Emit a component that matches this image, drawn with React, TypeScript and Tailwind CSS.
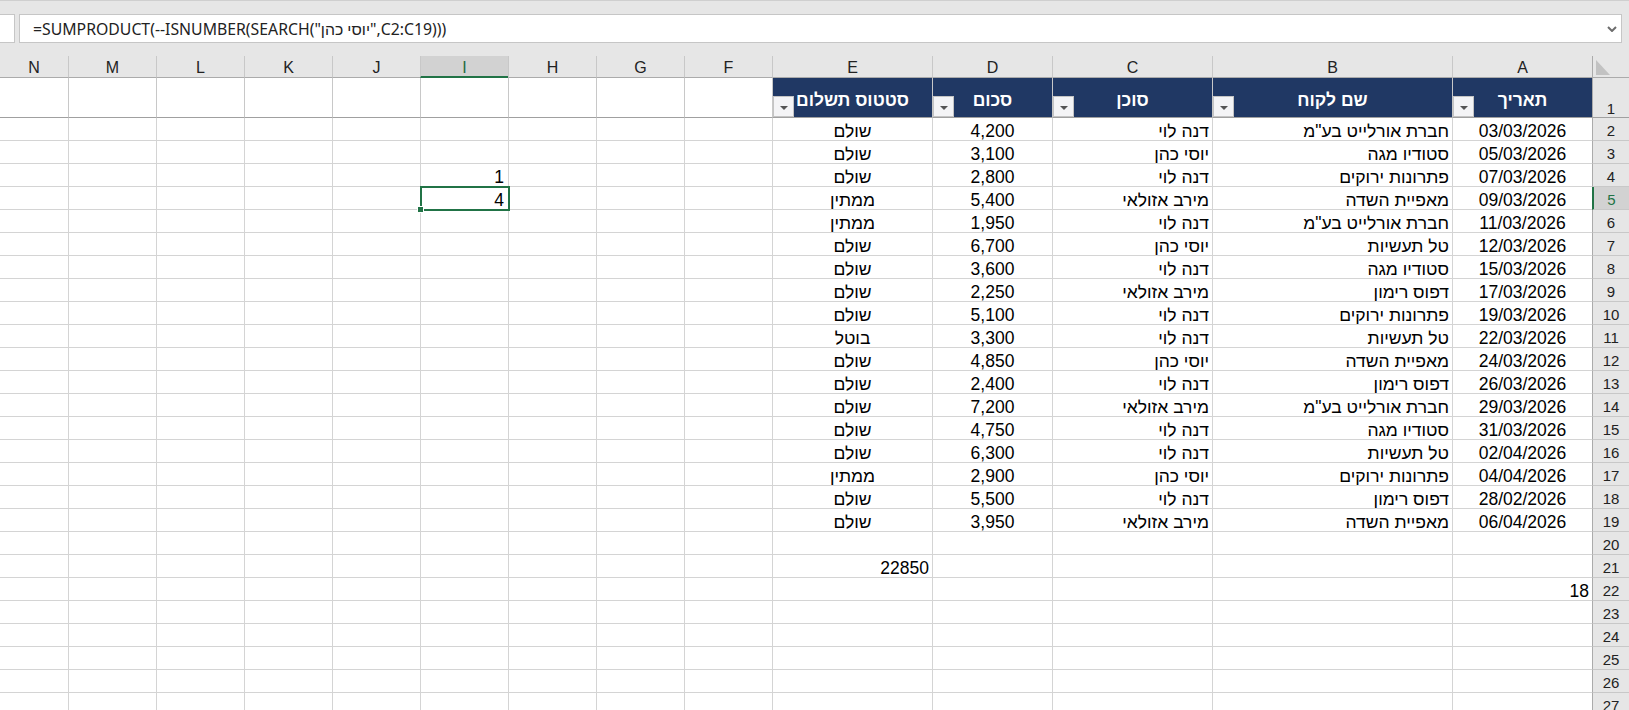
import React from "react";

type Row = [string, string, string, string, string];

const data: Row[] = [
  ["03/03/2026", 'חברת אורלייט בע"מ', "דנה לוי", "4,200", "שולם"],
  ["05/03/2026", "סטודיו מגה", "יוסי כהן", "3,100", "שולם"],
  ["07/03/2026", "פתרונות ירוקים", "דנה לוי", "2,800", "שולם"],
  ["09/03/2026", "מאפיית השדה", "מירב אזולאי", "5,400", "ממתין"],
  ["11/03/2026", 'חברת אורלייט בע"מ', "דנה לוי", "1,950", "ממתין"],
  ["12/03/2026", "טל תעשיות", "יוסי כהן", "6,700", "שולם"],
  ["15/03/2026", "סטודיו מגה", "דנה לוי", "3,600", "שולם"],
  ["17/03/2026", "דפוס רימון", "מירב אזולאי", "2,250", "שולם"],
  ["19/03/2026", "פתרונות ירוקים", "דנה לוי", "5,100", "שולם"],
  ["22/03/2026", "טל תעשיות", "דנה לוי", "3,300", "בוטל"],
  ["24/03/2026", "מאפיית השדה", "יוסי כהן", "4,850", "שולם"],
  ["26/03/2026", "דפוס רימון", "דנה לוי", "2,400", "שולם"],
  ["29/03/2026", 'חברת אורלייט בע"מ', "מירב אזולאי", "7,200", "שולם"],
  ["31/03/2026", "סטודיו מגה", "דנה לוי", "4,750", "שולם"],
  ["02/04/2026", "טל תעשיות", "דנה לוי", "6,300", "שולם"],
  ["04/04/2026", "פתרונות ירוקים", "יוסי כהן", "2,900", "ממתין"],
  ["28/02/2026", "דפוס רימון", "דנה לוי", "5,500", "שולם"],
  ["06/04/2026", "מאפיית השדה", "מירב אזולאי", "3,950", "שולם"],
];

const cols = ["A", "B", "C", "D", "E", "F", "G", "H", "I", "J", "K", "L", "M", "N"];
const headers = ["תאריך", "שם לקוח", "סוכן", "סכום", "סטטוס תשלום"];

function FilterButton() {
  return (
    <div className="absolute left-0 bottom-0 w-[21px] h-[21px] bg-[#f4f4f6] border border-[#c4c4c4] flex items-center justify-center pt-[3px]">
      <svg width="8" height="4" viewBox="0 0 8 4">
        <path d="M0 0H8L4 4Z" fill="#555555" />
      </svg>
    </div>
  );
}

function cellContent(r: number, c: string): { text: string; align: string } | null {
  if (r >= 2 && r <= 19) {
    const row = data[r - 2];
    const idx = cols.indexOf(c);
    if (idx <= 4) {
      const align = idx === 0 || idx === 3 || idx === 4 ? "justify-center" : "justify-start pr-[3px]";
      return { text: row[idx], align };
    }
  }
  if (r === 4 && c === "I") return { text: "1", align: "justify-start pr-[4px]" };
  if (r === 5 && c === "I") return { text: "4", align: "justify-start pr-[4px]" };
  if (r === 21 && c === "E") return { text: "22850", align: "justify-start pr-[3px]" };
  if (r === 22 && c === "A") return { text: "18", align: "justify-start pr-[3px]" };
  return null;
}

export default function App() {
  const rows = Array.from({ length: 26 }, (_, i) => i + 2);
  return (
    <div className="w-[1629px] h-[710px] overflow-hidden bg-[#e6e6e6] font-['Liberation_Sans',Arial,sans-serif] text-black">
      {/* formula bar */}
      <div className="h-[56px] border-t border-[#cfcfcf] pt-[13px] flex gap-[4px]">
        <div className="w-[15px] h-[29px] bg-white border border-l-0 border-[#c6c6c6]" />
        <div
          dir="ltr"
          className="w-[1603px] h-[29px] bg-white border border-[#c6c6c6] flex items-center pl-[13px] pr-[4px]"
        >
          <span className="flex-1 font-['Noto_Sans',sans-serif] text-[15.8px] text-[#222] pt-[2px]">
            =SUMPRODUCT(--ISNUMBER(SEARCH("יוסי כהן",C2:C19)))
          </span>
          <svg width="10" height="6" viewBox="0 0 10 6">
            <path d="M1 1L5 5L9 1" fill="none" stroke="#6d6d6d" strokeWidth="2" />
          </svg>
        </div>
      </div>

      {/* sheet */}
      <div
        dir="rtl"
        className="grid grid-cols-[37px_140px_240px_160px_120px_160px_88px_88px_88px_88px_88px_88px_88px_88px_68px] bg-white"
      >
        {/* column headers */}
        <div className="relative h-[22px] bg-[#e6e6e6] border-l border-b border-[#ababab]">
          <svg className="absolute left-[3px] bottom-[2px]" width="14" height="15" viewBox="0 0 14 15">
            <path d="M0 0L0 15L14 15Z" fill="#c2c2c2" />
          </svg>
        </div>
        {cols.map((c) => {
          const sel = c === "I";
          return (
            <div
              key={c}
              className={`h-[22px] flex justify-center pt-[2px] leading-[19px] text-[16px] ${
                c !== "N" ? "border-l border-l-[#c8c8c8]" : ""
              } ${
                sel
                  ? "bg-[#d2d2d2] border-b-2 border-b-[#217346] text-[#1e6b40]"
                  : "bg-[#e6e6e6] border-b border-b-[#ababab] text-[#222]"
              }`}
            >
              {c}
            </div>
          );
        })}

        {/* row 1 */}
        <div className="h-[40px] bg-[#e6e6e6] border-l border-l-[#ababab] border-b border-b-[#a0a0a0] flex items-end justify-center text-[15px] leading-[16px] text-[#222]">
          1
        </div>
        {cols.map((c, i) => {
          const isHead = i <= 4;
          return (
            <div
              key={c}
              className={`relative h-[40px] border-b border-b-[#a0a0a0] ${
                c !== "N" ? "border-l border-l-[#c8c8c8]" : ""
              } ${isHead ? "bg-[#203864]" : "bg-white"}`}
            >
              {isHead && (
                <>
                  <div className="h-full flex items-center justify-center pt-[6px] text-white font-bold text-[17.5px] whitespace-nowrap">
                    {headers[i]}
                  </div>
                  <FilterButton />
                </>
              )}
            </div>
          );
        })}

        {/* data rows */}
        {rows.map((r) => {
          const selRow = r === 5;
          return (
            <React.Fragment key={r}>
              <div
                className={`h-[23px] border-b border-b-[#c8c8c8] flex justify-center pt-[3px] leading-[20px] text-[15px] ${
                  selRow
                    ? "bg-[#d2d2d2] border-l-2 border-l-[#217346] text-[#217346]"
                    : "bg-[#e6e6e6] border-l border-l-[#ababab] text-[#222]"
                }`}
              >
                {r}
              </div>
              {cols.map((c) => {
                const content = cellContent(r, c);
                const selected = r === 5 && c === "I";
                return (
                  <div
                    key={c}
                    className={`relative h-[23px] border-b border-b-[#d4d4d4] ${
                      c !== "N" ? "border-l border-l-[#d4d4d4]" : ""
                    } ${content ? `flex ${content.align}` : ""} pt-[3px] leading-[20px] text-[17.5px] whitespace-nowrap`}
                  >
                    {content && <span>{content.text}</span>}
                    {selected && (
                      <>
                        <div className="absolute left-[-1px] right-[-2px] top-[-1px] bottom-[-2px] border-2 border-[#217346] z-10" />
                        <div className="absolute left-[-4px] bottom-[-4px] w-[7px] h-[7px] bg-[#217346] border border-white z-20" />
                      </>
                    )}
                  </div>
                );
              })}
            </React.Fragment>
          );
        })}
      </div>
    </div>
  );
}
